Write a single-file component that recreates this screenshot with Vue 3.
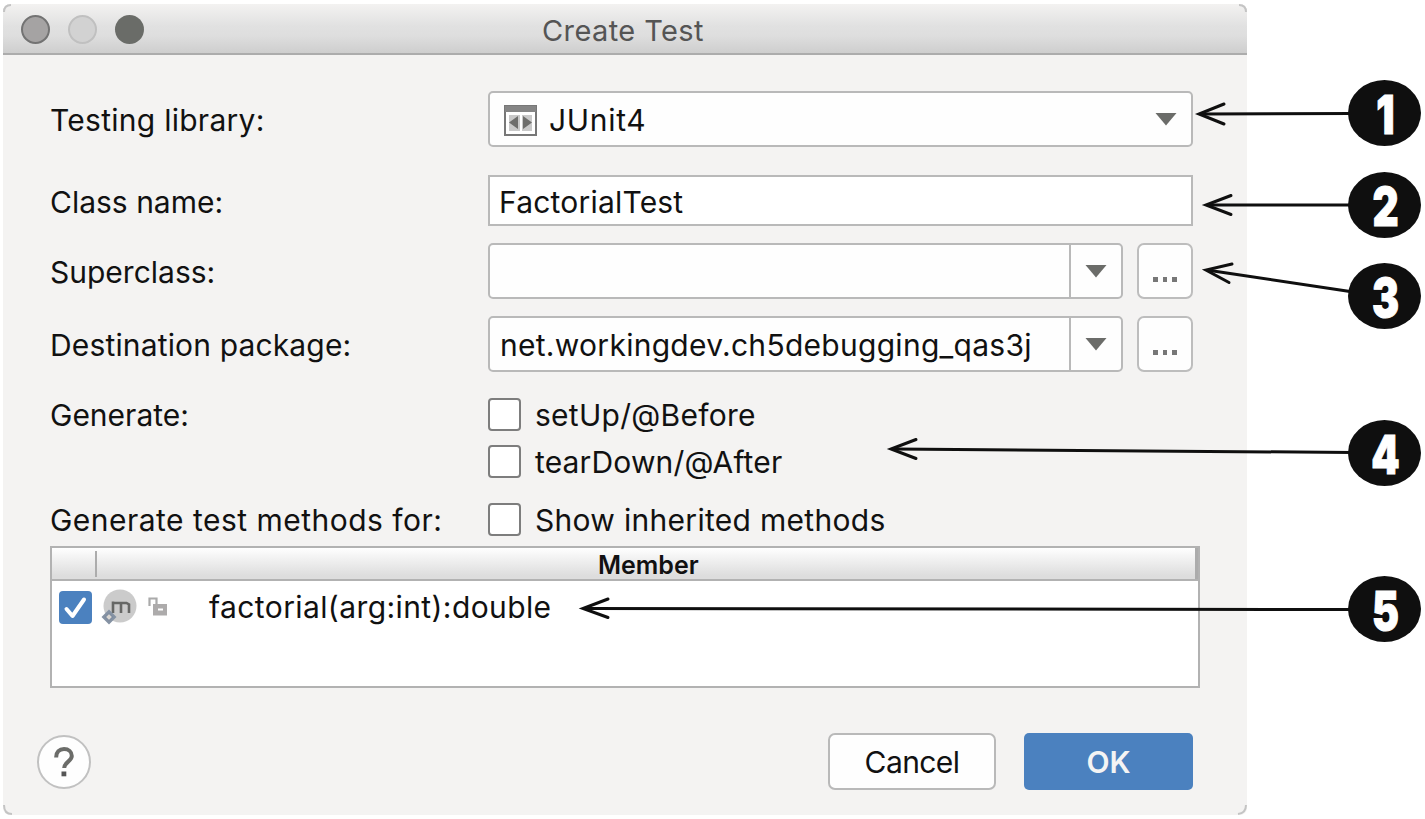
<script setup>
const callouts = [
  { n: 1, cy: 113, path: 'M1352 113.5L1203 114', head: 'M1224 104L1199 114L1224 124' },
  { n: 2, cy: 205, path: 'M1352 205L1210 205', head: 'M1231 195.500L1206 205L1231 214.500' },
  { n: 3, cy: 296, path: 'M1350 291.500L1210 270.500', head: 'M1232 264L1206 270L1229 282.500' },
  { n: 4, cy: 453, path: 'M1352 452.500L894 449', head: 'M916 439.500L891 449L916 458.500' },
  { n: 5, cy: 609, path: 'M1352 609.500L586 608.500', head: 'M608 599L583 608.500L608 617.500' }
]
</script>

<template>
  <main class="page">
    <section class="dialog">
      <header class="titlebar">
        <span class="light close"></span>
        <span class="light minimise"></span>
        <span class="light zoom"></span>
        <h1><span class="t-title">Create Test</span></h1>
      </header>

      <div class="form">
        <div class="row r-library">
          <label class="t-lib">Testing library:</label>
          <div class="combo">
            <svg class="junit" width="33" height="31" viewBox="0 0 33 31">
              <rect x="1" y="1" width="31" height="29" fill="#fff" stroke="#777" stroke-width="2" />
              <rect x="1" y="1" width="31" height="6" fill="#858585" />
              <rect x="5" y="10" width="11" height="16" fill="#c9c9c9" />
              <rect x="18" y="10" width="10" height="16" fill="#c9c9c9" />
              <path d="M14 11v13L5 17.500zM19 11v13l9-6.500z" fill="#6e6e6c" />
            </svg>
            <span class="t-junit">JUnit4</span>
            <svg class="arrow lone" width="22" height="13" viewBox="0 0 22 13"><path d="M0.500 0h21L11 12.500z" fill="#6b6c69" /></svg>
          </div>
        </div>
        <div class="row r-class">
          <label class="t-class">Class name:</label>
          <div class="field"><span class="t-fact">FactorialTest</span></div>
        </div>
        <div class="row r-super">
          <label class="t-super">Superclass:</label>
          <div class="combo editable">
            <span class="value"></span>
            <span class="drop"><svg class="arrow" width="22" height="13" viewBox="0 0 22 13"><path d="M0.500 0h21L11 12.500z" fill="#6b6c69" /></svg></span>
          </div>
          <button class="more"><i></i><i></i><i></i></button>
        </div>
        <div class="row r-dest">
          <label class="t-dest">Destination package:</label>
          <div class="combo editable">
            <span class="value"><span class="t-net">net.workingdev.ch5debugging_qas3j</span></span>
            <span class="drop"><svg class="arrow" width="22" height="13" viewBox="0 0 22 13"><path d="M0.500 0h21L11 12.500z" fill="#6b6c69" /></svg></span>
          </div>
          <button class="more"><i></i><i></i><i></i></button>
        </div>
        <div class="row check-row r-setup">
          <label class="t-gen">Generate:</label>
          <span class="box"></span><span class="t-setup">setUp/@Before</span>
        </div>
        <div class="row check-row r-tear">
          <label></label>
          <span class="box"></span><span class="t-tear">tearDown/@After</span>
        </div>
        <div class="row check-row r-show">
          <label class="t-gtm">Generate test methods for:</label>
          <span class="box"></span><span class="t-show">Show inherited methods</span>
        </div>
      </div>

      <div class="table">
        <div class="thead"><span class="split"></span><span class="th"><span class="t-member">Member</span></span><span class="end"></span></div>
        <div class="trow">
          <svg class="checked" width="33" height="33" viewBox="0 0 33 33">
            <rect width="33" height="33" rx="4" fill="#4b81bf" />
            <path d="M7.500 18L13.500 25L25 8.500" fill="none" stroke="#fff" stroke-width="4" stroke-linecap="round" stroke-linejoin="round" />
          </svg>
          <svg class="method" width="36" height="36" viewBox="0 0 36 36">
            <circle cx="19" cy="17" r="16.500" fill="#cbcbcb" />
            <path d="M12 24V12.500M12 14H25.500L28 15.500V24M20 14V24" fill="none" stroke="#666765" stroke-width="2.600" />
            <path d="M8 20.500l7.500 7.500l-7.500 7.500l-7.500-7.500z" fill="#8592a3" />
            <path d="M8 24.500l3.500 3.500l-3.500 3.500l-3.500-3.500z" fill="#d9d5d0" stroke="#6f8098" />
          </svg>
          <svg class="lock" width="20" height="19" viewBox="0 0 20 19">
            <path d="M1.500 9V1.500H8.500V7" fill="none" stroke="#aaa" stroke-width="2.200" />
            <rect x="5" y="7" width="14" height="11.500" fill="#adabab" />
            <rect x="10" y="11.500" width="5" height="2" fill="#fff" />
          </svg>
          <span class="t-method">factorial(arg:int):double</span>
        </div>
      </div>

      <footer class="footer">
        <button class="help">
          <svg width="20" height="30" viewBox="0 0 20 30">
            <path d="M2.200 10.500C2 5 5.500 2 10 2s7.800 2.900 7.800 7c0 5.300-7.600 6-7.600 12" fill="none" stroke="#6b6c69" stroke-width="4" />
            <rect x="7.500" y="24.500" width="4.800" height="4.800" fill="#555" />
          </svg>
        </button>
        <span class="spacer"></span>
        <button class="btn cancel"><span class="t-cancel">Cancel</span></button>
        <button class="btn ok"><span class="t-ok">OK</span></button>
      </footer>
    </section>

    <svg class="annotations" width="1425" height="819" viewBox="0 0 1425 819">
      <path d="M4 12Q4 5 11 5M1239 5Q1246 5 1246 12M4 805Q4 814 12 814M1238 814Q1246 813 1246 805" fill="none" stroke="#c4c4c4" stroke-width="2" />
      <g v-for="c in callouts" :key="c.n">
        <path :d="c.path" fill="none" stroke="#0f0f0f" stroke-width="3" />
        <path :d="c.head" fill="none" stroke="#0f0f0f" stroke-width="3" stroke-linecap="round" />
        <ellipse cx="1384.500" :cy="c.cy" rx="36.500" ry="33" fill="#0f0f0f" />
        <text :transform="`translate(1385.5 ${c.cy + 21}) scale(.75 1)`" text-anchor="middle" class="num">{{ c.n }}</text>
      </g>
    </svg>
  </main>
</template>

<style>
body { background: #fff; overflow: hidden; }
</style>

<style scoped>
.page {
  position: relative;
  width: 1425px;
  height: 819px;
  box-sizing: border-box;
  padding: 4px 0 0 3px;
  font-family: Inter, "Liberation Sans", sans-serif;
  font-size: 30px;
  line-height: 36px;
  color: #111;
}
.page * { box-sizing: border-box; }
.dialog {
  width: 1244px;
  height: 811px;
  background: #f4f3f2;
  border-radius: 7px;
  overflow: hidden;
  display: flex;
  flex-direction: column;
}
.titlebar {
  position: relative;
  height: 51px;
  flex: none;
  display: flex;
  align-items: center;
  gap: 18px;
  padding-left: 18px;
  background: linear-gradient(#f3f2f1 0, #e1e1e1 45%, #dedede 65%, #cecece 100%);
  border-bottom: 2px solid #acacac;
}
.light { width: 29px; height: 29px; border-radius: 50%; margin-top: 1px; }
.close { background: #a5a3a3; border: 2px solid #737373; }
.minimise { background: #d2d2d2; border: 2px solid #c0c0c0; }
.zoom { background: #6a6c68; }
h1 { position: absolute; inset: 0; margin: 0; padding: 9px 0 0 539px; font-size: 29px; font-weight: 400; line-height: 36px; color: #555; }
span, label { white-space: nowrap; }
.form { padding: 36px 0 0 47px; }
.row { display: flex; align-items: center; }
.row > label { width: 438px; flex: none; }
.r-library { height: 56px; }
.r-class { height: 51px; margin-top: 28px; }
.r-super { height: 56px; margin-top: 17px; }
.r-dest { height: 56px; margin-top: 17px; }
.r-setup { height: 33px; margin-top: 26px; }
.r-tear { height: 33px; margin-top: 14px; }
.r-show { height: 33px; margin-top: 25px; }
.combo, .field {
  width: 705px;
  height: 100%;
  display: flex;
  align-items: center;
  background: #fefefe;
  border: 2px solid #b9b9b9;
  border-radius: 5px;
}
.row:not(.check-row) > label, .t-junit, .t-fact { padding-top: 2px; }
.t-net { display: block; padding-top: 2px; letter-spacing: .28px; }
.t-title { letter-spacing: .4px; }
.t-lib { letter-spacing: .27px; }
.t-dest { letter-spacing: .15px; }
.t-junit { letter-spacing: .7px; }
.t-fact { letter-spacing: .2px; margin-left: -1px; }
.t-setup { letter-spacing: .27px; }
.t-tear { letter-spacing: .15px; }
.t-gtm { letter-spacing: .48px; }
.t-show { letter-spacing: .3px; }
.t-cancel { letter-spacing: -.6px; }
.field { border-radius: 0; padding-left: 10px; background: #fff; }
.junit { margin: 3px 12px 0 14px; }
.lone { margin-left: auto; margin-right: 14px; }
.editable { width: 635px; }
.value { flex: 1; padding-left: 10px; }
.drop { width: 52px; height: 100%; border-left: 2px solid #b9b9b9; display: flex; align-items: center; justify-content: center; }
.more {
  margin-left: 14px;
  width: 56px;
  height: 56px;
  padding: 17px 0 0;
  border: 2px solid #bdbdbd;
  border-radius: 7px;
  background: #fefefe;
  display: flex;
  align-items: center;
  justify-content: center;
  gap: 5px;
}
.more i { width: 4.500px; height: 5px; background: #777; }
.box { width: 33px; height: 33px; flex: none; border: 2px solid #7d7d7d; border-radius: 4px; background: #fff; margin-right: 14px; }
.table { width: 1150px; height: 142px; flex: none; margin: 10px 0 0 47px; background: #fff; border: 2px solid #b2b2b2; }
.thead { height: 33px; display: flex; border-bottom: 2px solid #b2b2b2; background: linear-gradient(#fff 0, #f3f3f3 30%, #dddddd 90%); }
.split { width: 45px; height: 26px; margin-top: 3px; border-right: 2px solid #acacac; }
.th { flex: 1; font-size: 25px; font-weight: 600; line-height: 34px; padding-left: 501px; }
.end { width: 3px; background: #acacac; }
.trow { display: flex; align-items: center; height: 52px; padding-left: 7px; }
.method { margin-left: 9px; }
.lock { margin-left: 11px; margin-top: -2px; }
.t-method { margin-left: 41px; letter-spacing: .4px; }
.footer { display: flex; align-items: center; padding: 0 54px 0 34px; height: 57px; margin-top: 45px; }
.help { width: 54px; height: 54px; border-radius: 50%; border: 2px solid #c1c1c1; background: #fefefe; padding: 0; display: flex; align-items: center; justify-content: center; }
.spacer { flex: 1; }
.btn { height: 57px; font: inherit; color: #111; border-radius: 7px; padding: 1px 0 0; }
.cancel { width: 168px; background: #fefefe; border: 2px solid #b9b9b9; margin-right: 28px; }
.ok { width: 169px; background: #4b81bf; border: 0; border-radius: 5px; color: #f4f4f4; font-weight: 600; }
.annotations { position: absolute; left: 0; top: 0; }
.num { font-family: Inter, "Liberation Sans", sans-serif; font-size: 54px; font-weight: 900; fill: #fff; stroke: #fff; stroke-width: 1px; }
</style>
